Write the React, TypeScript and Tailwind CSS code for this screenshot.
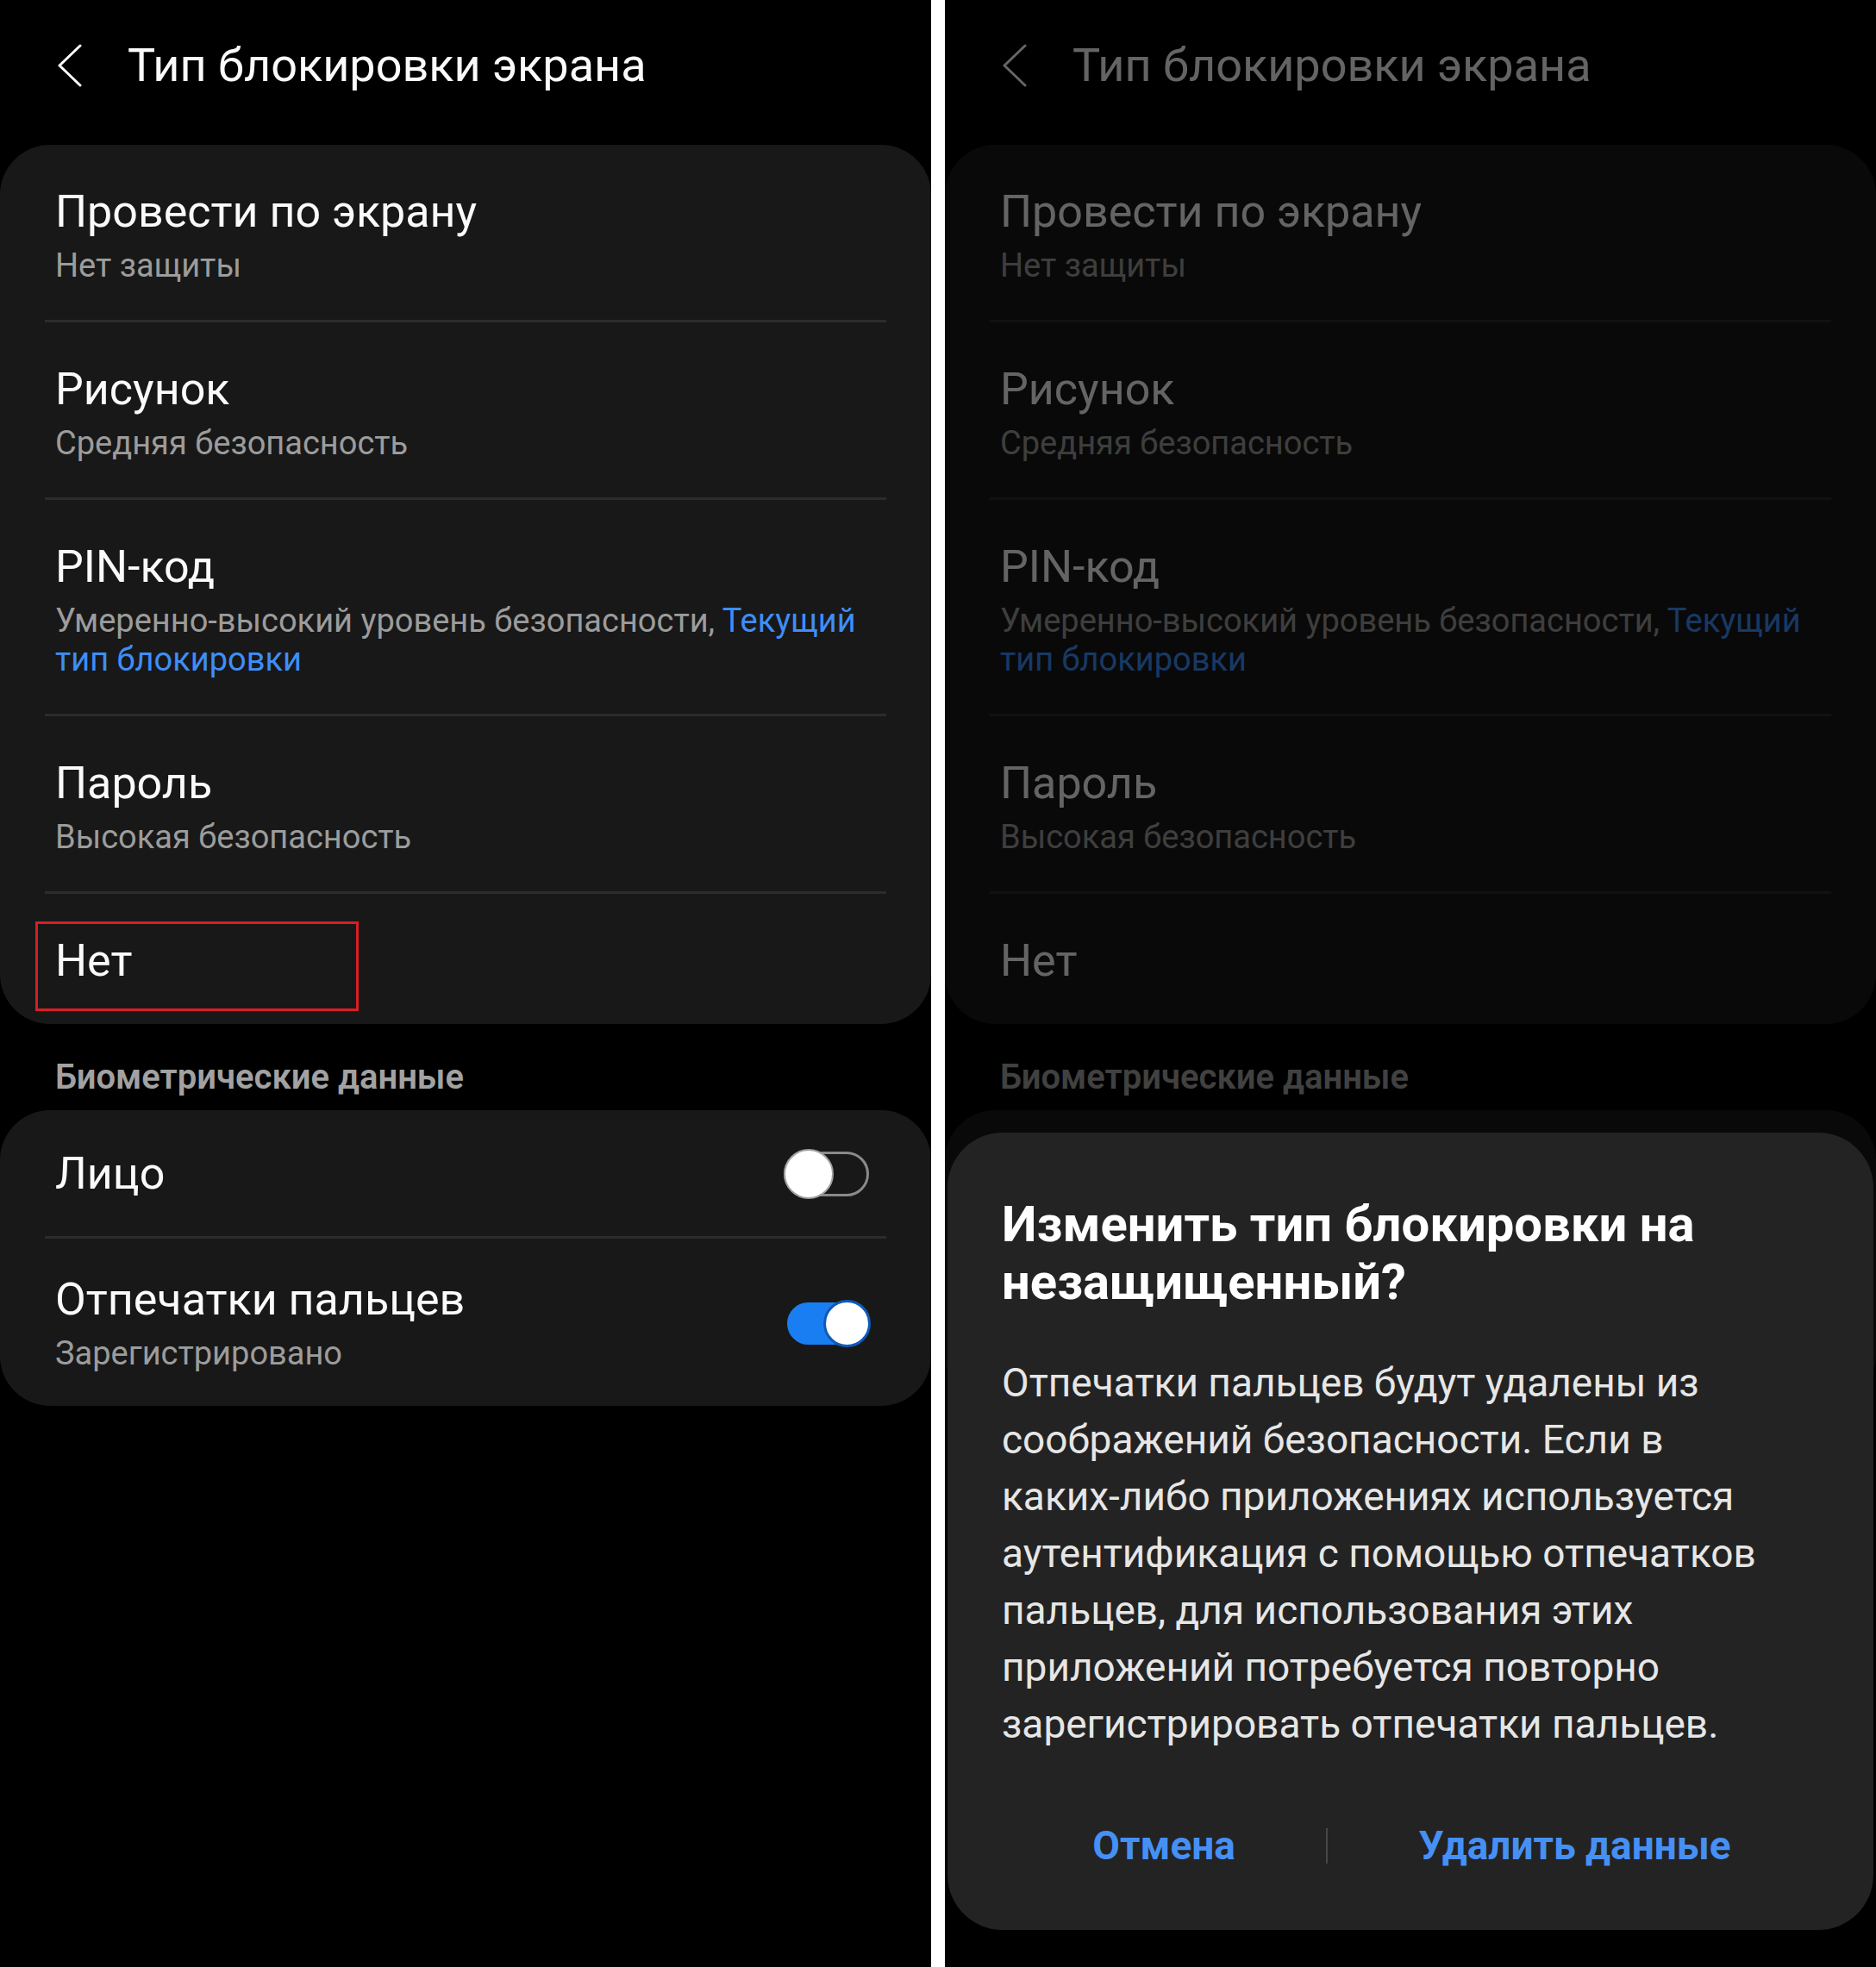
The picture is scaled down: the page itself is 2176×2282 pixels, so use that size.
import type { ReactNode } from "react";

type Option = {
  title: string;
  sub?: ReactNode;
  marked?: boolean;
};

const link = "text-[#3e8ef7]";

const options: Option[] = [
  { title: "Провести по экрану", sub: "Нет защиты" },
  { title: "Рисунок", sub: "Средняя безопасность" },
  {
    title: "PIN-код",
    sub: (
      <>
        Умеренно-высокий уровень безопасности,{" "}
        <span className={link}>Текущий</span>
        <br />
        <span className={link}>тип блокировки</span>
      </>
    ),
  },
  { title: "Пароль", sub: "Высокая безопасность" },
  { title: "Нет", marked: true },
];

const Divider = () => <div className="mx-[52px] h-[3px] bg-[#2c2c2c]" />;

function OptionRow({ title, sub, marked }: Option) {
  return (
    <div className={`relative px-[64px] pt-[47px] ${sub ? "pb-[40px]" : "pb-[42px]"}`}>
      <div className="text-[52px] leading-[62px] text-[#fafafa]">{title}</div>
      {sub && (
        <div className="mt-[9px] text-[38px] leading-[45px] text-[#9c9c9c]">
          {sub}
        </div>
      )}
      {marked && (
        <div className="absolute left-[41px] top-[32px] h-[104px] w-[375px] border-[3px] border-[#d81e25]" />
      )}
    </div>
  );
}

function Toggle({ on }: { on: boolean }) {
  if (on) {
    return (
      <div className="relative h-[55px] w-[97px] shrink-0">
        <div className="absolute inset-y-[3px] left-0 right-[2px] rounded-full bg-[#1a7ef3]" />
        <div className="absolute right-0 top-0 h-[55px] w-[55px] rounded-full border-[3px] border-[#0e5ab8] bg-white" />
      </div>
    );
  }
  return (
    <div className="relative h-[58px] w-[99px] shrink-0">
      <div className="absolute inset-y-[3px] left-0 right-0 rounded-full border-[3px] border-[#8a8a8a]" />
      <div className="absolute left-0 top-0 h-[58px] w-[58px] rounded-full border-2 border-[#a0a0a0] bg-white" />
    </div>
  );
}

function Screen({ withMark }: { withMark: boolean }) {
  return (
    <div className="flex flex-col">
      <div className="flex h-[152px] items-center pl-[66px]">
        <svg width="30" height="50" viewBox="0 0 30 50" fill="none">
          <polyline
            points="27,2 3,25 27,48"
            stroke="#ffffff"
            strokeWidth="3"
            strokeLinecap="round"
            strokeLinejoin="round"
          />
        </svg>
        <div className="ml-[52px] text-[54px] leading-[64px] text-[#fafafa]">
          Тип блокировки экрана
        </div>
      </div>

      <div className="mt-[16px] rounded-[58px] bg-[#181818]">
        {options.map((o, i) => (
          <div key={o.title}>
            <OptionRow {...o} marked={withMark && o.marked} />
            {i < options.length - 1 && <Divider />}
          </div>
        ))}
      </div>

      <div className="px-[64px] pt-[40px] pb-[16px] text-[40px] font-semibold leading-[44px] text-[#a2a2a2]">
        Биометрические данные
      </div>

      <div className="rounded-[58px] bg-[#181818]">
        <div className="flex items-center justify-between pl-[64px] pr-[72px] pt-[43px] pb-[41px]">
          <div className="text-[52px] leading-[62px] text-[#fafafa]">Лицо</div>
          <Toggle on={false} />
        </div>
        <Divider />
        <div className="flex items-center justify-between pl-[64px] pr-[70px] pt-[40px] pb-[38px]">
          <div>
            <div className="text-[52px] leading-[62px] text-[#fafafa]">
              Отпечатки пальцев
            </div>
            <div className="mt-[9px] text-[38px] leading-[45px] text-[#9c9c9c]">
              Зарегистрировано
            </div>
          </div>
          <Toggle on />
        </div>
      </div>
    </div>
  );
}

function ConfirmDialog() {
  return (
    <div className="absolute bottom-[43px] left-[3px] right-[3px] rounded-[64px] bg-[#232323] pl-[63px] pr-[60px] pt-[73px] pb-[68px]">
      <div className="whitespace-nowrap text-[58px] font-bold leading-[67px] text-white">
        Изменить тип блокировки на
        <br />
        незащищенный?
      </div>
      <div className="mt-[50px] whitespace-nowrap text-[46px] leading-[66px] text-[#e6e6e6]">
        Отпечатки пальцев будут удалены из
        <br />
        соображений безопасности. Если в
        <br />
        каких-либо приложениях используется
        <br />
        аутентификация с помощью отпечатков
        <br />
        пальцев, для использования этих
        <br />
        приложений потребуется повторно
        <br />
        зарегистрировать отпечатки пальцев.
      </div>
      <div className="mt-[78px] flex items-center">
        <div className="flex-auto text-center text-[46px] font-bold leading-[60px] text-[#4690f5]">
          Отмена
        </div>
        <div className="h-[41px] w-[2px] bg-[#474747]" />
        <div className="flex-auto text-center text-[46px] font-bold leading-[60px] text-[#4690f5]">
          Удалить данные
        </div>
      </div>
    </div>
  );
}

export default function App() {
  return (
    <div className="flex h-[2282px] w-[2176px] overflow-hidden bg-black font-['Roboto',sans-serif]">
      <div className="w-[1080px] shrink-0">
        <Screen withMark />
      </div>
      <div className="w-[16px] shrink-0 bg-white" />
      <div className="relative w-[1080px] shrink-0 overflow-hidden">
        <Screen withMark={false} />
        <div className="absolute inset-0 bg-black/60" />
        <ConfirmDialog />
      </div>
    </div>
  );
}
